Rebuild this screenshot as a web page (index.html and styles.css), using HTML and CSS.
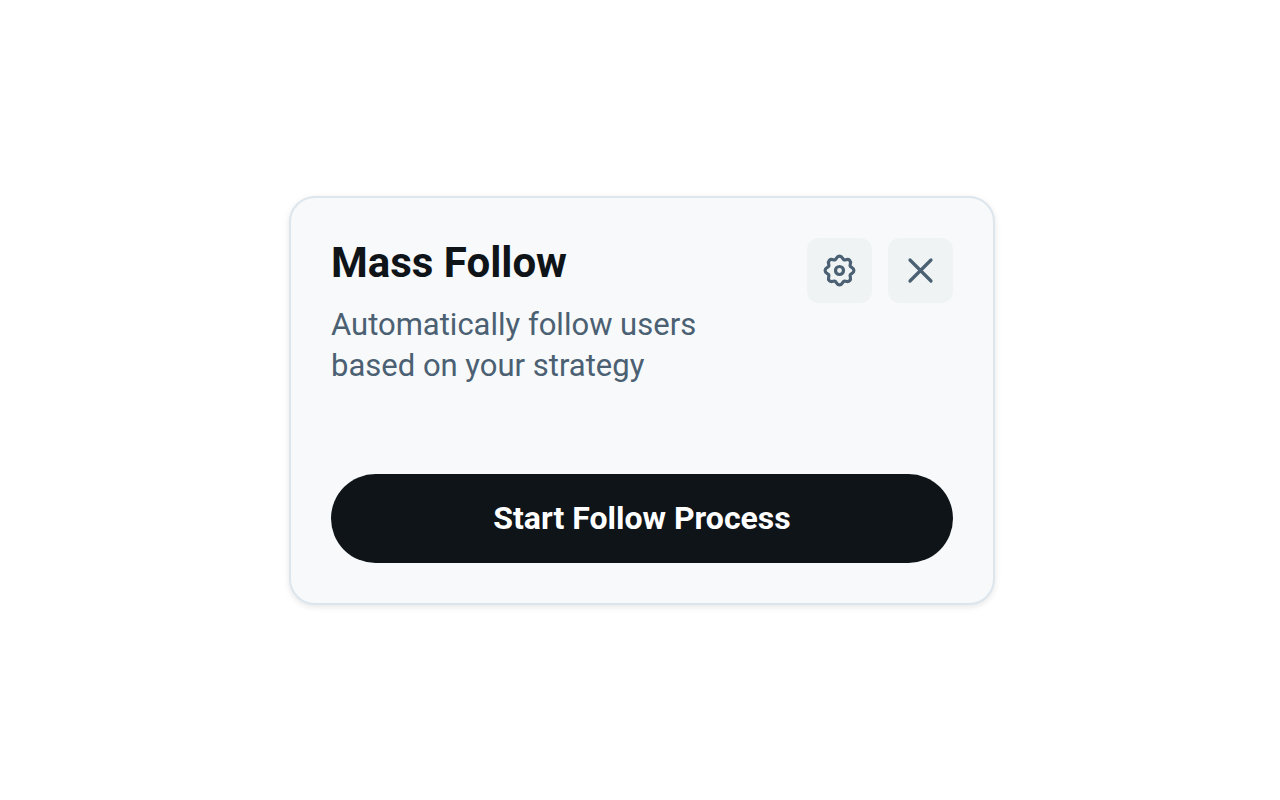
FILE: index.html
```html
<!DOCTYPE html>
<html lang="en">
<head>
<meta charset="utf-8">
<meta name="viewport" content="width=device-width, initial-scale=1">
<title>Mass Follow</title>
<link rel="stylesheet" href="styles.css">
</head>
<body>
<main class="card">
  <header class="card-header">
    <div class="intro">
      <h1 class="title">Mass Follow</h1>
      <p class="description">Automatically follow users based on your strategy</p>
    </div>
    <div class="actions">
      <button class="icon-button" type="button" aria-label="Settings">
        <svg class="icon" viewBox="-16.5 -16.5 33 33" aria-hidden="true">
          <path d="M-4.4-10.7C-2.9-11.3-3-14.4 0-14.4S2.9-11.3 4.4-10.7C5.94-10.04 8.06-12.3 10.18-10.18S10.04-5.94 10.7-4.4C11.3-2.9 14.4-3 14.4 0S11.3 2.9 10.7 4.4C10.04 5.94 12.3 8.06 10.18 10.18S5.94 10.04 4.4 10.7C2.9 11.3 3 14.4 0 14.4S-2.9 11.3-4.4 10.7C-5.94 10.04-8.06 12.3-10.18 10.18S-10.04 5.94-10.7 4.4C-11.3 2.9-14.4 3-14.4 0S-11.3-2.9-10.7-4.4C-10.04-5.94-12.3-8.06-10.18-10.18S-5.94-10.04-4.4-10.7Z"/>
          <circle r="4"/>
        </svg>
      </button>
      <button class="icon-button" type="button" aria-label="Close">
        <svg class="icon" viewBox="-16.5 -16.5 33 33" aria-hidden="true">
          <path d="M-10.5-10.5 10.5 10.5M10.5-10.5-10.5 10.5"/>
        </svg>
      </button>
    </div>
  </header>
  <button class="start-button" type="button">Start Follow Process</button>
</main>
</body>
</html>
```
FILE: styles.css
```css
* {
  box-sizing: border-box;
}

body {
  display: flex;
  align-items: center;
  justify-content: center;
  min-height: 100vh;
  margin: 0;
  padding: 16px 16px 16px 20px;
  background: #fff;
  font-family: Roboto, "Liberation Sans", sans-serif;
}

.card {
  display: flex;
  flex-direction: column;
  gap: 88px;
  width: 100%;
  max-width: 706px;
  padding: 40px;
  border: 2px solid #dde6ed;
  border-radius: 26px;
  background: #f7f9fa;
  box-shadow: 0 2px 6px rgba(0, 0, 0, 0.1);
}

.card-header {
  display: flex;
  align-items: flex-start;
  justify-content: space-between;
  gap: 16px;
}

.intro {
  max-width: 400px;
}

.title {
  margin: 0 0 16px;
  color: #0f1419;
  font-size: 42px;
  font-weight: 700;
  line-height: 50px;
}

.description {
  margin: 0;
  color: #4b6072;
  font-size: 31px;
  line-height: 41px;
}

.actions {
  display: flex;
  gap: 16px;
}

.icon-button {
  display: grid;
  place-items: center;
  width: 65px;
  height: 65px;
  padding: 0;
  border: 0;
  border-radius: 12px;
  background: #eff3f4;
  color: #4b6072;
  cursor: pointer;
}

.icon {
  width: 33px;
  height: 33px;
  fill: none;
  stroke: currentColor;
  stroke-width: 3.2;
  stroke-linecap: round;
  stroke-linejoin: round;
}

.start-button {
  padding: 24px;
  border: 0;
  border-radius: 45px;
  background: #0f1419;
  color: #fff;
  font: inherit;
  font-size: 32px;
  font-weight: 700;
  line-height: 41px;
  cursor: pointer;
}
```
